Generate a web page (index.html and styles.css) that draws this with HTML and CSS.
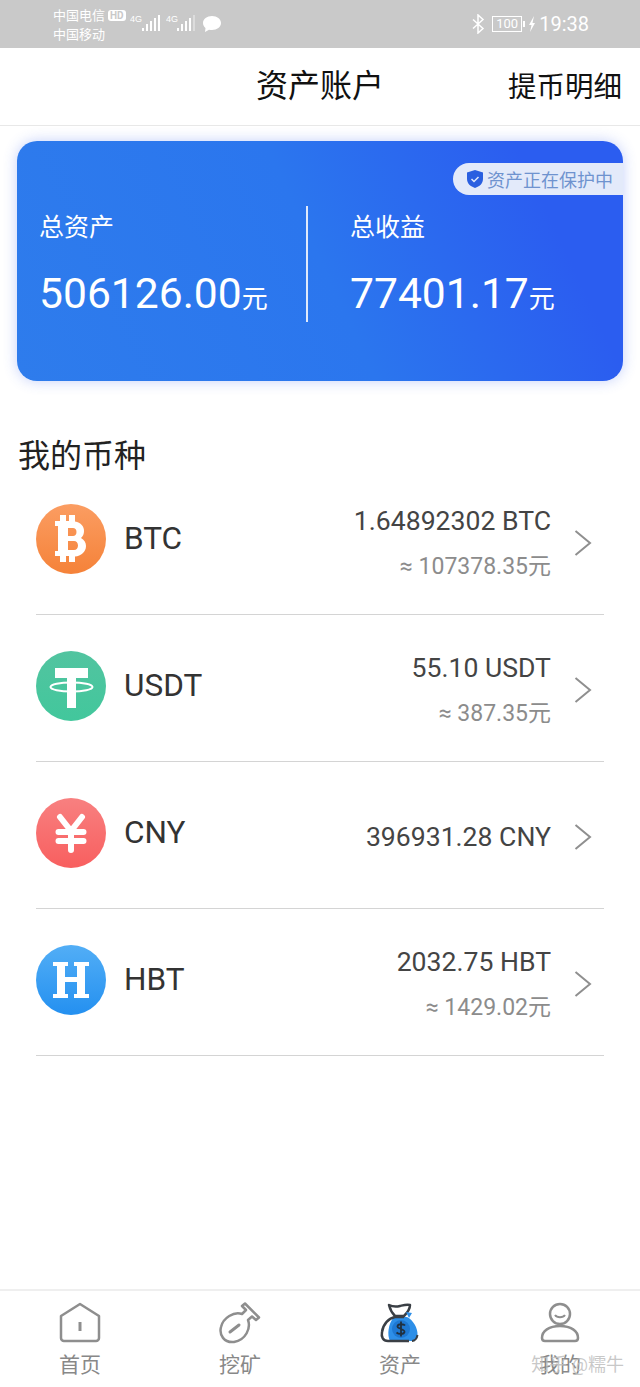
FILE: index.html
```html
<!DOCTYPE html>
<html>
<head>
  <title>资产账户</title>
  <link rel="stylesheet" href="styles.css">
</head>
<body>
  <div class="status-bar">
    <div class="carriers">
      <div class="carrier-line">中国电信<span class="hd">HD</span></div>
      <div class="carrier-line">中国移动</div>
    </div>
    <svg class="signal" width="32" height="22" viewBox="0 0 32 22">
      <text x="0" y="9" class="net-text">4G</text>
      <g fill="#fff">
        <rect x="12" y="15" width="2" height="3"/>
        <rect x="16" y="11" width="2" height="7"/>
        <rect x="20" y="8" width="2" height="10"/>
        <rect x="24" y="5" width="2" height="13"/>
        <rect x="28" y="2" width="2" height="16"/>
      </g>
    </svg>
    <svg class="signal-two" width="30" height="22" viewBox="0 0 30 22">
      <text x="0" y="9" class="net-text">4G</text>
      <g fill="#fff">
        <rect x="11" y="15" width="2" height="3"/>
        <rect x="15" y="11" width="2" height="7"/>
        <rect x="19" y="8" width="2" height="10"/>
        <rect x="23" y="5" width="2" height="13"/>
        <rect x="27" y="2" width="2" height="16" opacity="0.35"/>
      </g>
    </svg>
    <svg class="chat" width="20" height="18" viewBox="0 0 20 18">
      <path d="M10 1c5 0 9 3 9 7s-4 7-9 7c-1 0-2 0-3-.3L3 17l.5-4C2 11.800 1 10 1 8c0-4 4-7 9-7z" fill="#fff"/>
    </svg>
    <div class="status-right">
      <svg width="14" height="20" viewBox="0 0 14 20">
        <path d="M2 5.500l10 9-5 4.500V1l5 4.500-10 9" fill="none" stroke="#fff" stroke-width="1.500"/>
      </svg>
      <span class="battery">100</span>
      <span class="battery-tip"></span>
      <svg width="8" height="16" viewBox="0 0 8 16">
        <path d="M6 0L1 9h2.500L2 16l5-9H4.500z" fill="#fff"/>
      </svg>
      <span class="clock">19:38</span>
    </div>
  </div>

  <div class="header">
    <div class="header-title">资产账户</div>
    <div class="header-link">提币明细</div>
  </div>

  <div class="asset-card">
    <div class="protect-badge">
      <svg width="18" height="20" viewBox="0 0 18 20">
        <path d="M9 1l8 2.500V10c0 4.500-3.500 7.500-8 9-4.500-1.500-8-4.500-8-9V3.500z" fill="#2a5fe0"/>
        <path d="M5.500 10l2.500 2.500 4.500-4.500" fill="none" stroke="#dfe8fa" stroke-width="1.500"/>
      </svg>
      <span>资产正在保护中</span>
    </div>
    <div class="asset-col">
      <div class="asset-label">总资产</div>
      <div class="asset-value">506126.00<span class="asset-unit">元</span></div>
    </div>
    <div class="asset-divider"></div>
    <div class="asset-col asset-col-right">
      <div class="asset-label">总收益</div>
      <div class="asset-value">77401.17<span class="asset-unit">元</span></div>
    </div>
  </div>

  <h2 class="section-title">我的币种</h2>

  <div class="coin-list">
    <div class="coin-row">
      <div class="coin-icon coin-btc">
        <svg width="70" height="70" viewBox="0 0 70 70">
          <path d="M24 11h6v6h3v-6h6v6.500c6 1 9 5 9 9.500 0 3-1 5-3 7 3 1.500 5 4.500 5 8 0 6-5 10-11 10.500V58h-6v-6h-3v6h-6v-6H19v-5h3V22h-3v-5h5zM32 24v8h5c2 0 3.500-1.500 3.500-4s-1.500-4-3.500-4zM32 37v9h6c2.500 0 4-2 4-4.500S40.500 37 38 37z" fill="#fff" fill-rule="evenodd"/>
        </svg>
      </div>
      <div class="coin-name">BTC</div>
      <div class="coin-amounts">
        <div class="coin-amount">1.64892302 BTC</div>
        <div class="coin-worth">≈ 107378.35元</div>
      </div>
      <svg class="chevron" width="18" height="28" viewBox="0 0 18 28">
        <path d="M1.500 2L16 14 1.500 26" fill="none" stroke="#8f8f8f" stroke-width="2"/>
      </svg>
    </div>
    <div class="coin-row">
      <div class="coin-icon coin-usdt">
        <svg width="70" height="70" viewBox="0 0 70 70">
          <path d="M19 17h33v10H40v30h-9V27H19z" fill="#fff"/>
          <ellipse cx="35.500" cy="36" rx="21" ry="4.500" fill="none" stroke="#fff" stroke-width="2"/>
        </svg>
      </div>
      <div class="coin-name">USDT</div>
      <div class="coin-amounts">
        <div class="coin-amount">55.10 USDT</div>
        <div class="coin-worth">≈ 387.35元</div>
      </div>
      <svg class="chevron" width="18" height="28" viewBox="0 0 18 28">
        <path d="M1.500 2L16 14 1.500 26" fill="none" stroke="#8f8f8f" stroke-width="2"/>
      </svg>
    </div>
    <div class="coin-row">
      <div class="coin-icon coin-cny">
        <svg width="70" height="70" viewBox="0 0 70 70">
          <path d="M24 19l11 14 11-14M35 33v19M22.500 34h25M22.500 43h25" fill="none" stroke="#fff" stroke-width="6" stroke-linecap="round" stroke-linejoin="round"/>
        </svg>
      </div>
      <div class="coin-name">CNY</div>
      <div class="coin-amounts">
        <div class="coin-amount">396931.28 CNY</div>
      </div>
      <svg class="chevron" width="18" height="28" viewBox="0 0 18 28">
        <path d="M1.500 2L16 14 1.500 26" fill="none" stroke="#8f8f8f" stroke-width="2"/>
      </svg>
    </div>
    <div class="coin-row">
      <div class="coin-icon coin-hbt">
        <svg width="70" height="70" viewBox="0 0 70 70">
          <path d="M17 17h15v4h-3v11h12V21h-3v-4h15v4h-4v28h4v4H38v-4h3V37H29v12h3v4H17v-4h4V21h-4z" fill="#fff"/>
        </svg>
      </div>
      <div class="coin-name">HBT</div>
      <div class="coin-amounts">
        <div class="coin-amount">2032.75 HBT</div>
        <div class="coin-worth">≈ 1429.02元</div>
      </div>
      <svg class="chevron" width="18" height="28" viewBox="0 0 18 28">
        <path d="M1.500 2L16 14 1.500 26" fill="none" stroke="#8f8f8f" stroke-width="2"/>
      </svg>
    </div>
  </div>

  <div class="tab-bar">
    <div class="tab">
      <svg width="42" height="42" viewBox="0 0 42 42">
        <path d="M2 14L21 2l19 12v22a3 3 0 0 1-3 3H5a3 3 0 0 1-3-3z" fill="none" stroke="#8e8e8e" stroke-width="2.500" stroke-linejoin="round"/>
        <path d="M21 20v9" stroke="#8e8e8e" stroke-width="3"/>
      </svg>
      <div class="tab-label">首页</div>
    </div>
    <div class="tab">
      <svg width="44" height="42" viewBox="0 0 44 42">
        <path d="M24 12l4-4-4-4 3-2.500 14 14-3 2.500-4-3.500-4 3.500c3 8-2 20-14 22C6 41 1 33 3 25c2-9 13-16 21-13z" fill="none" stroke="#8e8e8e" stroke-width="2.500" stroke-linejoin="round"/>
        <path d="M12 30l9-7" stroke="#8e8e8e" stroke-width="3" stroke-linecap="round"/>
      </svg>
      <div class="tab-label">挖矿</div>
    </div>
    <div class="tab">
      <svg width="42" height="42" viewBox="0 0 42 42">
        <path d="M15 15h13c6 3 11 11 10.500 18 0 4-3 6-6.500 6H11C8 33 9 22 15 15z" fill="#2d8fe8"/>
        <path d="M30 39H9c-5 0-7-4-6-9 1-8 7-14 13-15h9" fill="none" stroke="#3a3f45" stroke-width="2.500"/>
        <path d="M33 39c3 0 5-3 5.500-6" fill="none" stroke="#3a3f45" stroke-width="2"/>
        <path d="M10 3c4 2 7 2 11 1 4-1 7-2 10-1 0 4-3 8-6 11H16C13 11 11 7 10 3z" fill="#fff" stroke="#3a3f45" stroke-width="2.500" stroke-linejoin="round"/>
        <path d="M27 10l6 1-3 5z" fill="#2d8fe8"/>
        <circle cx="22" cy="27" r="9" fill="#1e78d2"/>
        <path d="M26 23.500c-1-1.500-6.500-2-7.500.5-1 3 7.500 2.500 7 6-.5 2.500-6 2.500-8 .5M22 19.500v15" fill="none" stroke="#20303f" stroke-width="1.800"/>
      </svg>
      <div class="tab-label">资产</div>
    </div>
    <div class="tab">
      <svg width="42" height="42" viewBox="0 0 42 42">
        <circle cx="21" cy="12" r="10" fill="none" stroke="#8e8e8e" stroke-width="2.500"/>
        <path d="M16 13c2 3 8 3 10 0" fill="none" stroke="#8e8e8e" stroke-width="2"/>
        <path d="M6 39c-2 0-3-1-3-3 0-7 7-12 18-12s18 5 18 12c0 2-1 3-3 3z" fill="none" stroke="#8e8e8e" stroke-width="2.500" stroke-linejoin="round"/>
      </svg>
      <div class="tab-label">我的</div>
    </div>
    <div class="watermark">知乎 @糯牛</div>
  </div>
</body>
</html>
```

FILE: styles.css
```css
body {
  font-family: Roboto, "Noto Sans CJK SC", sans-serif;
  margin: 0;
  padding: 0;
  width: 640px;
  height: 1387px;
  display: flex;
  flex-direction: column;
  background-color: #fff;
  color: #333;
  overflow: hidden;
}

.status-bar {
  height: 48px;
  flex-shrink: 0;
  background-color: #c9c9c9;
  display: flex;
  align-items: center;
  padding-left: 53px;
  color: #fff;
  box-sizing: border-box;
}

.carriers {
  font-size: 13px;
  line-height: 19px;
  width: 77px;
  flex-shrink: 0;
  margin-top: 1px;
}

.carrier-line {
  display: flex;
  align-items: center;
}

.hd {
  font-size: 10px;
  font-weight: bold;
  line-height: 11px;
  background-color: #fff;
  color: #c9c9c9;
  border-radius: 3px;
  padding: 0 2px;
  margin-left: 3px;
}

.signal {
  margin-top: -1px;
}

.signal-two {
  margin-left: 4px;
  margin-top: -1px;
}

.net-text {
  font-size: 9px;
  fill: #fff;
  font-family: "Liberation Sans", sans-serif;
}

.chat {
  margin-left: 6px;
}

.status-right {
  margin-left: auto;
  margin-right: 51px;
  display: flex;
  align-items: center;
}

.battery {
  font-size: 13px;
  line-height: 14px;
  border: 1px solid #fff;
  padding: 0 2px;
  margin-left: 7px;
  width: 24px;
  text-align: center;
}

.battery-tip {
  width: 2px;
  height: 6px;
  background-color: #fff;
  margin: 0 3px 0 1px;
}

.clock {
  font-size: 20px;
  margin-left: 3px;
}

.header {
  height: 77px;
  flex-shrink: 0;
  display: flex;
  align-items: center;
  justify-content: center;
  border-bottom: 1px solid #e8e8e8;
  position: relative;
  color: #111;
}

.header-title {
  font-size: 32px;
  margin-bottom: 8px;
}

.header-link {
  position: absolute;
  right: 18px;
  top: 16px;
  font-size: 28.5px;
}

.asset-card {
  margin: 15px 17px 0;
  height: 240px;
  flex-shrink: 0;
  border-radius: 20px;
  background: linear-gradient(65deg, #2e7cec 0%, #2b76ee 50%, #2b5df0 85%);
  box-shadow: 0 0 14px rgba(60, 100, 240, 0.3);
  display: flex;
  align-items: center;
  position: relative;
  color: #fff;
}

.protect-badge {
  position: absolute;
  top: 22px;
  right: 0;
  height: 32px;
  width: 170px;
  box-sizing: border-box;
  padding-left: 13px;
  border-radius: 16px 0 0 16px;
  background-color: #e3eafa;
  color: #6f93cf;
  font-size: 18px;
  display: flex;
  align-items: center;
  gap: 3px;
}

.asset-col {
  width: 289px;
  padding-left: 22px;
  margin-top: 17px;
  box-sizing: border-box;
}

.asset-col-right {
  padding-left: 42px;
  width: auto;
}

.asset-label {
  font-size: 25px;
  line-height: 32px;
}

.asset-value {
  font-size: 42.6px;
  line-height: 52px;
  margin-top: 23px;
  margin-bottom: 2px;
  white-space: nowrap;
}

.asset-unit {
  font-size: 26px;
}

.asset-divider {
  width: 2px;
  height: 116px;
  margin-top: 6px;
  background-color: #dfe9fb;
  flex-shrink: 0;
}

.section-title {
  font-size: 32px;
  font-weight: normal;
  line-height: 40px;
  margin: 55px 0 0 18px;
  color: #222;
}

.coin-list {
  margin: -8px 36px 0;
}

.coin-row {
  height: 146px;
  border-bottom: 1px solid #d4d4d4;
  display: flex;
  align-items: center;
}

.coin-icon {
  width: 70px;
  height: 70px;
  border-radius: 50%;
  margin-top: -5px;
  flex-shrink: 0;
}

.coin-icon svg {
  display: block;
}

.coin-btc {
  background: linear-gradient(#fb9d62, #f58239);
}

.coin-usdt {
  background: linear-gradient(#52c4a0, #42c79c);
}

.coin-cny {
  background: linear-gradient(#f88080, #f85f5f);
}

.coin-hbt {
  background: linear-gradient(#52aef6, #2490f0);
}

.coin-name {
  font-size: 31.5px;
  margin-left: 18px;
  margin-top: -6px;
  color: #333;
}

.coin-amounts {
  margin-left: auto;
  text-align: right;
  margin-top: 3px;
}

.coin-amount {
  font-size: 26.6px;
  line-height: 34px;
  color: #444;
}

.coin-worth {
  font-size: 23px;
  line-height: 30px;
  margin-top: 14px;
  color: #8c8c8c;
}

.chevron {
  margin-left: 23px;
  margin-right: 12px;
  margin-top: 4px;
}

.tab-bar {
  margin-top: auto;
  height: 98px;
  flex-shrink: 0;
  box-sizing: border-box;
  border-top: 2px solid #efefef;
  display: flex;
  position: relative;
}

.tab {
  flex: 1;
  display: flex;
  flex-direction: column;
  align-items: center;
  padding-top: 11px;
}

.tab svg {
  display: block;
}

.tab-label {
  font-size: 21px;
  line-height: 28px;
  color: #888;
  margin-top: 7px;
}

.watermark {
  position: absolute;
  right: 16px;
  top: 59px;
  font-size: 18px;
  color: rgba(190, 190, 190, 0.85);
}
```
